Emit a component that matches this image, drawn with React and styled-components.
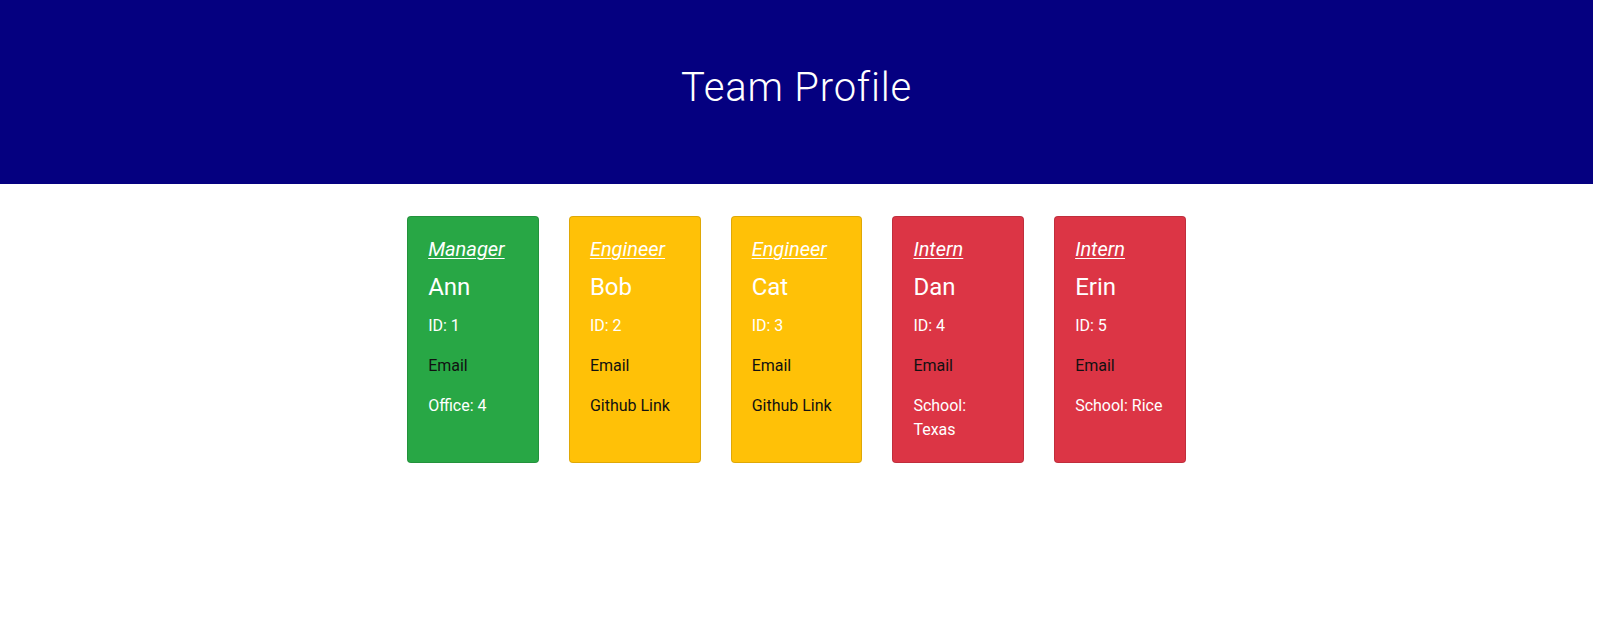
import React from "react";
import styled, { createGlobalStyle } from "styled-components";

const Global = createGlobalStyle`
  html, body { margin: 0; padding: 0; background: #fff; }
  body {
    font-family: "Roboto Slab", "Roboto", "Noto Sans", sans-serif;
    color: #212529;
    -webkit-font-smoothing: antialiased;
  }
`;

const Page = styled.div`
  width: calc(100% - 15px);
`;

const Header = styled.header`
  background: #050080;
  padding: 64px 32px;
  margin-bottom: 32px;
  text-align: center;
`;

const Title = styled.h1`
  margin: 0 0 8px;
  font-size: 40px;
  line-height: 48px;
  font-weight: 300;
  letter-spacing: 0.8px;
  color: #fff;
`;

const CardRow = styled.main`
  display: flex;
  justify-content: center;
  align-items: stretch;
  gap: 30px;
`;

const colors = {
  manager: "#28a745",
  engineer: "#ffc107",
  intern: "#dc3545",
};

const Card = styled.section`
  box-sizing: border-box;
  width: 131.75px;
  padding: 20px;
  border: 1px solid rgba(0, 0, 0, 0.125);
  border-radius: 4px;
  background: ${(p) => colors[p.$kind]};
`;

const Role = styled.h5`
  margin: 0 0 12px;
  font-size: 20px;
  line-height: 24px;
  font-weight: 400;
  font-style: italic;
  text-decoration: underline;
  text-underline-offset: 2px;
  text-decoration-thickness: 1px;
  color: #fff;
`;

const Name = styled.h4`
  margin: 0 0 12px;
  font-size: 24px;
  line-height: 28.8px;
  font-weight: 400;
  color: #fff;
`;

const Line = styled.p`
  margin: 0 0 16px;
  font-size: 16px;
  line-height: 24px;
  font-weight: 400;
  color: ${(p) => (p.$dark ? "#111" : "#fff")};
  &:last-child {
    margin-bottom: 0;
  }
`;

const team = [
  { kind: "manager", role: "Manager", name: "Ann", id: 1, extra: "Office: 4", extraDark: false },
  { kind: "engineer", role: "Engineer", name: "Bob", id: 2, extra: "Github Link", extraDark: true },
  { kind: "engineer", role: "Engineer", name: "Cat", id: 3, extra: "Github Link", extraDark: true },
  { kind: "intern", role: "Intern", name: "Dan", id: 4, extra: "School: Texas", extraDark: false },
  { kind: "intern", role: "Intern", name: "Erin", id: 5, extra: "School: Rice", extraDark: false },
];

export default function App() {
  return (
    <Page>
      <Global />
      <Header>
        <Title>Team Profile</Title>
      </Header>
      <CardRow>
        {team.map((m) => (
          <Card key={m.id} $kind={m.kind}>
            <Role>{m.role}</Role>
            <Name>{m.name}</Name>
            <Line>ID: {m.id}</Line>
            <Line $dark>Email</Line>
            <Line $dark={m.extraDark}>{m.extra}</Line>
          </Card>
        ))}
      </CardRow>
    </Page>
  );
}
